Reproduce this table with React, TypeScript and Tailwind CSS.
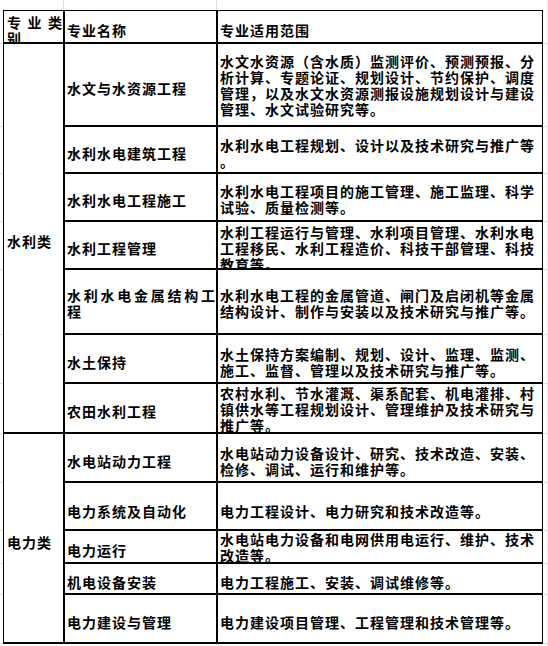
import React from "react";

type CellProps = { children?: React.ReactNode; className?: string };

function Cell({ children, className = "" }: CellProps) {
  return (
    <div className={"bg-white overflow-hidden flex flex-col " + className}>
      {children}
    </div>
  );
}

function Lines({ lines }: { lines: string[] }) {
  return (
    <>
      {lines.map((l, i) => (
        <div key={i} className="whitespace-nowrap">
          {l}
        </div>
      ))}
    </>
  );
}

function Spread({ text }: { text: string }) {
  return (
    <div className="flex justify-between whitespace-nowrap">
      {Array.from(text).map((c, i) => (
        <span key={i}>{c}</span>
      ))}
    </div>
  );
}

type Row = { name: React.ReactNode; desc: string[]; nameCls?: string; descCls?: string };

const waterRows: Row[] = [
  {
    name: "水文与水资源工程",
    desc: [
      "水文水资源（含水质）监测评价、预测预报、分",
      "析计算、专题论证、规划设计、节约保护、调度",
      "管理，以及水文水资源测报设施规划设计与建设",
      "管理、水文试验研究等。",
    ],
    descCls: "justify-center pt-[1px]",
  },
  { name: "水利水电建筑工程", desc: ["水利水电工程规划、设计以及技术研究与推广等", "。"] },
  { name: "水利水电工程施工", desc: ["水利水电工程项目的施工管理、施工监理、科学", "试验、质量检测等。"], descCls: "justify-center pt-[4px]" },
  {
    name: "水利工程管理",
    desc: ["水利工程运行与管理、水利项目管理、水利水电", "工程移民、水利工程造价、科技干部管理、科技", "教育等。"],
  },
  {
    name: (
      <>
        <Spread text="水利水电金属结构工" />
        <div>程</div>
      </>
    ),
    desc: ["水利水电工程的金属管道、闸门及启闭机等金属", "结构设计、制作与安装以及技术研究与推广等。"],
    nameCls: "justify-center pt-[3px]",
    descCls: "justify-center pt-[3px]",
  },
  { name: "水土保持", desc: ["水土保持方案编制、规划、设计、监理、监测、", "施工、监督、管理以及技术研究与推广等。"] },
  {
    name: "农田水利工程",
    desc: ["农村水利、节水灌溉、渠系配套、机电灌排、村", "镇供水等工程规划设计、管理维护及技术研究与", "推广等。"],
    descCls: "justify-center pt-[1px]",
  },
];

const powerRows: Row[] = [
  { name: "水电站动力工程", desc: ["水电站动力设备设计、研究、技术改造、安装、", "检修、调试、运行和维护等。"] },
  { name: "电力系统及自动化", desc: ["电力工程设计、电力研究和技术改造等。"], nameCls: "justify-center pt-[9px]", descCls: "justify-center pt-[9px]" },
  { name: "电力运行", desc: ["水电站电力设备和电网供用电运行、维护、技术", "改造等。"], descCls: "justify-start pt-0" },
  { name: "机电设备安装", desc: ["电力工程施工、安装、调试维修等。"] },
  { name: "电力建设与管理", desc: ["电力建设项目管理、工程管理和技术管理等。"] },
];

function RowCells({ r }: { r: Row }) {
  return (
    <>
      <Cell className={"col-start-2 pl-[2px] " + (r.nameCls ?? "justify-center pt-[6px]")}>
        {typeof r.name === "string" ? <div className="whitespace-nowrap">{r.name}</div> : r.name}
      </Cell>
      <Cell className={"col-start-3 pl-[2px] " + (r.descCls ?? "justify-center pt-[6px]")}>
        <Lines lines={r.desc} />
      </Cell>
    </>
  );
}

const gridYs = [43, 126, 173, 221, 269, 334, 383, 433, 482, 530, 563, 594, 643];

export default function App() {
  return (
    <div className="relative w-[548px] h-[646px] bg-white overflow-hidden">
      <svg className="absolute inset-0" width="548" height="646" aria-hidden="true">
        <line x1="63.5" y1="0" x2="63.5" y2="10" stroke="#dcdcdc" strokeWidth="1" />
        <line x1="216.5" y1="0" x2="216.5" y2="10" stroke="#dcdcdc" strokeWidth="1" />
        <line x1="547.5" y1="0" x2="547.5" y2="646" stroke="#e3e3e3" strokeWidth="1" />
        {gridYs.map((y) => (
          <g key={y}>
            <line x1="543" y1={y + 0.5} x2="548" y2={y + 0.5} stroke="#dcdcdc" strokeWidth="1" />
            <line x1="0" y1={y + 0.5} x2="3" y2={y + 0.5} stroke="#dcdcdc" strokeWidth="1" />
          </g>
        ))}
      </svg>
      <div className="relative pl-[3px] pt-[10px]">
        <div
          className="w-[540px] grid grid-cols-[59px_151px_324px] grid-rows-[31px_81px_45px_46px_46px_63px_47px_48px_47px_46px_31px_29px_47px] gap-[2px] bg-black border-l border-t border-r border-b-2 border-black text-black text-[14px] leading-[16px] tracking-[1px] font-bold font-['Noto_Sans_CJK_SC',sans-serif] [text-spacing-trim:space-all]"
        >
          <Cell className="col-start-1 justify-center pl-[3px] pt-[6px]">
            <Spread text="专业类" />
            <div>别</div>
          </Cell>
          <Cell className="col-start-2 justify-center pl-[2px] pt-[6px]">
            <div className="whitespace-nowrap">专业名称</div>
          </Cell>
          <Cell className="col-start-3 justify-center pl-[2px] pt-[6px]">
            <div className="whitespace-nowrap">专业适用范围</div>
          </Cell>

          <Cell className="col-start-1 row-span-7 justify-center pl-[3px] pt-[6px]">
            <div className="whitespace-nowrap">水利类</div>
          </Cell>
          {waterRows.map((r, i) => (
            <RowCells key={"w" + i} r={r} />
          ))}

          <Cell className="col-start-1 row-span-5 justify-center pl-[3px] pt-[8px]">
            <div className="whitespace-nowrap">电力类</div>
          </Cell>
          {powerRows.map((r, i) => (
            <RowCells key={"p" + i} r={r} />
          ))}
        </div>
      </div>
    </div>
  );
}
